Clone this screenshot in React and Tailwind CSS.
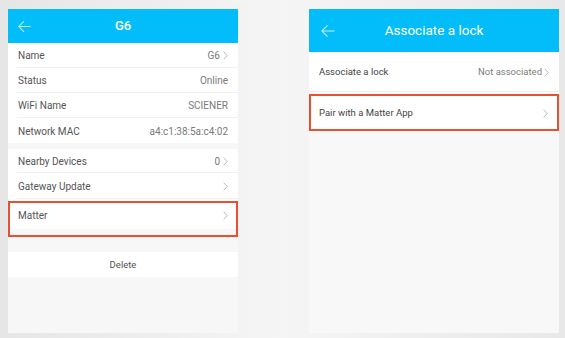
import React from "react";

const Chevron = ({ cls = "" }) => (
  <svg width="5" height="9" viewBox="0 0 5 9" className={cls}>
    <path d="M0.7 0.7 L4.2 4.5 L0.7 8.3" fill="none" stroke="#b3b3b3" strokeWidth="0.9" />
  </svg>
);

const BackArrow = ({ size = 14 }) => (
  <svg width={size} height={size} viewBox="0 0 14 14">
    <path d="M13.5 7 H1 M6.5 1.3 L0.9 7 L6.5 12.7" fill="none" stroke="rgba(255,255,255,0.75)" strokeWidth="1.1" />
  </svg>
);

function LRow({ label, value, chevron, h = "h-[25px]", last, pad = "pt-[1px]" }) {
  return (
    <div className={`bg-white pl-[9px] ${h}`}>
      <div className={`flex h-full items-center justify-between pl-[1px] pr-[10px] ${pad} ${last ? "" : "border-b border-[#f1f1f1]"}`}>
        <span className="text-[10px] text-[#555555]">{label}</span>
        <span className="flex items-center gap-[3px] text-[10px] text-[#7a7a7a]">
          {value}
          {chevron && <Chevron />}
        </span>
      </div>
    </div>
  );
}

export default function App() {
  return (
    <div
      className="flex h-[338px] w-[565px] bg-linear-to-r from-[#e6e6e6] via-[#f5f5f5] to-[#e8e8e8] pt-[9px]"
      style={{ fontFamily: "Roboto, 'Noto Sans', sans-serif" }}
    >
      {/* Left panel */}
      <div className="relative ml-[8px] flex h-[324px] w-[230px] flex-col bg-[#f7f7f7]">
        <div className="relative flex h-[34px] items-center justify-center bg-[#02bdf9]">
          <div className="absolute left-[10px] top-[11px]">
            <BackArrow size={13} />
          </div>
          <span className="text-[13px] font-medium text-white">G6</span>
        </div>
        <LRow label="Name" value="G6" chevron />
        <LRow label="Status" value="Online" />
        <LRow label="WiFi Name" value="SCIENER" />
        <LRow label="Network MAC" value="a4:c1:38:5a:c4:02" last />
        <div className="h-[6px]" />
        <LRow label="Nearby Devices" value="0" chevron h="h-[24px]" />
        <LRow label="Gateway Update" value="" chevron h="h-[26px]" />
        <LRow label="Matter" value="" chevron h="h-[30px]" last pad="pt-[3px]" />
        <div className="h-[23px]" />
        <div className="flex h-[25px] items-center justify-center bg-white pt-[2px] text-[9.5px] text-[#555555]">Delete</div>
        <div className="pointer-events-none absolute left-0 top-[192px] h-[36px] w-[230px] border-2 border-[#ea5030]" />
      </div>

      {/* Right panel */}
      <div className="relative ml-[71px] flex h-[324px] w-[250px] flex-col bg-[#f8f8f8]">
        <div className="relative flex h-[43px] items-center justify-center bg-[#02bdf9]">
          <div className="absolute left-[12px] top-[15px]">
            <BackArrow size={14} />
          </div>
          <span className="text-[13.5px] text-white">Associate a lock</span>
        </div>
        <div className="flex h-[40px] items-center justify-between border-b border-[#eeeeee] bg-white pl-[10px] pr-[10px] pt-[2px]">
          <span className="text-[9.5px] text-[#454545]">Associate a lock</span>
          <span className="flex items-center gap-[2px] text-[9.5px] text-[#7d7d7d]">
            Not associated
            <Chevron />
          </span>
        </div>
        <div className="flex h-[40px] items-center justify-between bg-white pl-[10px] pr-[11px] pt-[2px]">
          <span className="text-[9.5px] text-[#454545]">Pair with a Matter App</span>
          <Chevron />
        </div>
        <div className="pointer-events-none absolute left-0 top-[85px] h-[37px] w-[250px] border-2 border-[#ea5030]" />
      </div>
    </div>
  );
}
